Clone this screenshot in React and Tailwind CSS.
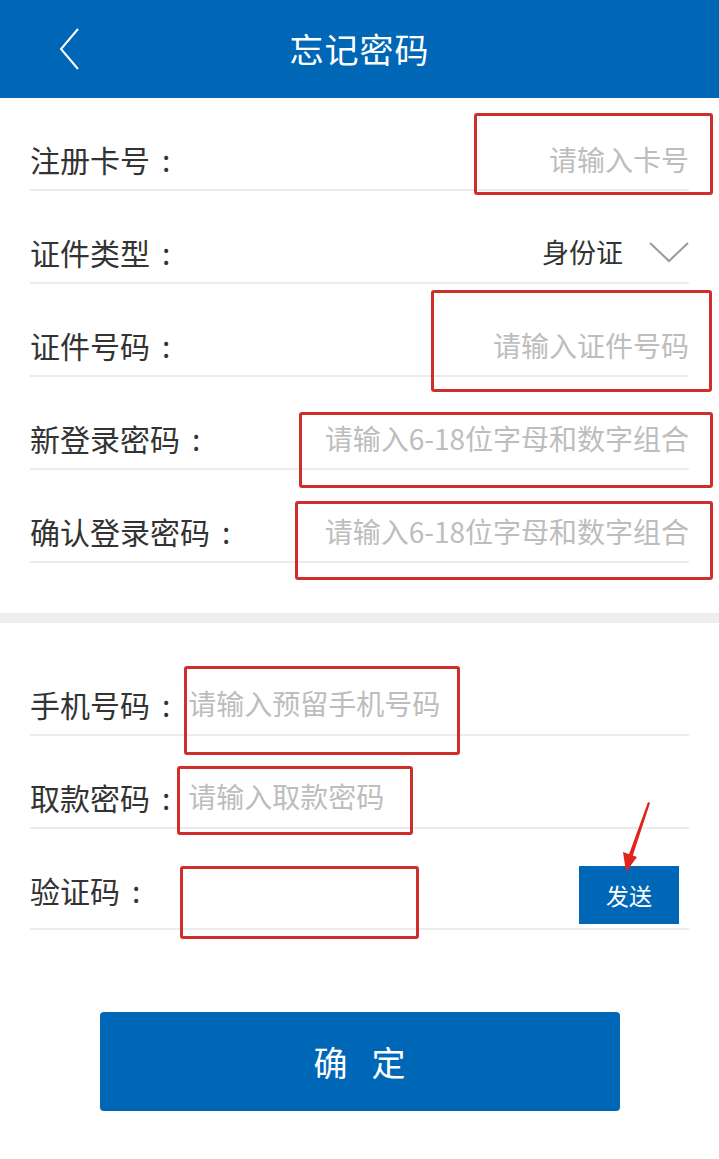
import React from 'react';

const font = { fontFamily: '"Noto Sans CJK SC", "Noto Sans", sans-serif' };

const Row = ({ label, children, className = 'h-[93px]' }) => (
  <div className={`mx-[30px] flex items-end justify-between border-b-2 border-[#ececec] pb-[14px] ${className}`}>
    <div className="text-[30px] leading-[32px] text-[#333] whitespace-nowrap">
      {label}
      <span className="ml-[12px]">:</span>
    </div>
    {children}
  </div>
);

const Placeholder = ({ children }) => (
  <span className="text-[28px] leading-[32px] text-[#bdbdbd] whitespace-nowrap">{children}</span>
);

const Mark = ({ className }) => (
  <div className={`absolute border-[3px] border-[#cf2f2b] rounded-[3px] ${className}`}></div>
);

export default () => {
  return (
    <div className="relative w-[719px] h-[1159px] bg-white overflow-hidden" style={font}>
      <div className="relative h-[98px] bg-[#0067b6] flex items-center justify-center">
        <svg className="absolute left-[58px] top-[28px]" width="24" height="42" viewBox="0 0 24 42">
          <polyline points="20,1 3,21 20,41" fill="none" stroke="#fff" strokeWidth="2" />
        </svg>
        <span className="text-[34px] text-white tracking-[1px] leading-none">忘记密码</span>
      </div>

      <Row label="注册卡号" className="h-[93px]">
        <Placeholder>请输入卡号</Placeholder>
      </Row>
      <Row label="证件类型">
        <div className="flex items-center">
          <span className="text-[27px] leading-[32px] text-[#333]">身份证</span>
          <svg className="ml-[26px]" width="40" height="22" viewBox="0 0 40 22">
            <polyline points="1,2 20,20 39,2" fill="none" stroke="#9a9a9a" strokeWidth="2" />
          </svg>
        </div>
      </Row>
      <Row label="证件号码">
        <Placeholder>请输入证件号码</Placeholder>
      </Row>
      <Row label="新登录密码">
        <Placeholder>请输入6-18位字母和数字组合</Placeholder>
      </Row>
      <Row label="确认登录密码">
        <Placeholder>请输入6-18位字母和数字组合</Placeholder>
      </Row>

      <div className="mt-[50px] h-[10px] bg-[#eeeeee]"></div>

      <Row label="手机号码" className="h-[113px] justify-start">
        <div className="ml-[18px]">
          <Placeholder>请输入预留手机号码</Placeholder>
        </div>
      </Row>
      <Row label="取款密码" className="h-[93px] justify-start">
        <div className="ml-[18px]">
          <Placeholder>请输入取款密码</Placeholder>
        </div>
      </Row>
      <div className="mx-[30px] h-[101px] flex items-end justify-between border-b-2 border-[#ececec] pb-[4px]">
        <div className="mb-[18px] text-[30px] leading-[32px] text-[#333] whitespace-nowrap">
          验证码<span className="ml-[12px]">:</span>
        </div>
        <button className="mr-[10px] w-[100px] h-[58px] bg-[#0067b6] text-white text-[23px] leading-none">
          发送
        </button>
      </div>

      <div className="flex justify-center mt-[82px]">
        <button className="w-[520px] h-[99px] rounded-[4px] bg-[#0067b6] text-white text-[34px] leading-none flex items-center justify-center gap-[24px]">
          <span>确</span>
          <span>定</span>
        </button>
      </div>

      <Mark className="left-[474px] top-[113px] w-[239px] h-[82px]" />
      <Mark className="left-[431px] top-[290px] w-[281px] h-[102px]" />
      <Mark className="left-[299px] top-[412px] w-[414px] h-[76px]" />
      <Mark className="left-[295px] top-[501px] w-[418px] h-[79px]" />
      <Mark className="left-[184px] top-[666px] w-[276px] h-[89px]" />
      <Mark className="left-[177px] top-[766px] w-[236px] h-[69px]" />
      <Mark className="left-[180px] top-[866px] w-[239px] h-[73px]" />

      <svg className="absolute left-[615px] top-[800px]" width="40" height="75" viewBox="0 0 40 75">
        <polygon points="33,2 35,3 17,58 13,57" fill="#e0241c" />
        <polygon points="8,52 22,57 11,72" fill="#e0241c" />
      </svg>
    </div>
  );
};
